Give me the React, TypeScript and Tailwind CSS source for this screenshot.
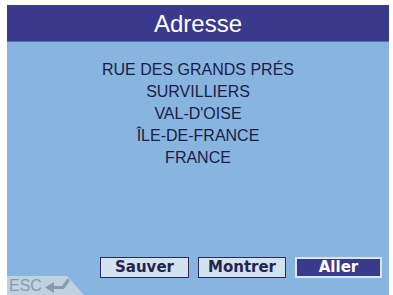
import { type ReactNode } from 'react'

const lines = ['RUE DES GRANDS PRÉS', 'SURVILLIERS', "VAL-D'OISE", 'ÎLE-DE-FRANCE', 'FRANCE']

function Button({ children, primary = false, width }: { children: ReactNode; primary?: boolean; width: string }) {
  return (
    <div
      className={
        primary
          ? `flex h-[21px] items-center justify-center border-2 border-[#d6e6f4] bg-[#3a3a8c] text-[15px] font-bold text-white ${width}`
          : `flex h-[21px] items-center justify-center border border-[#2a2a5c] bg-[#d2e2ee] text-[15px] font-bold text-[#24244e] ${width}`
      }
      style={{ fontFamily: '"DejaVu Sans", sans-serif' }}
    >
      {children}
    </div>
  )
}

export default function App() {
  return (
    <div className="h-[295px] w-[393px] bg-white pl-[7px] pr-[4px] pt-[5px]">
      <div className="flex h-full flex-col" style={{ fontFamily: '"Liberation Sans", Arial, sans-serif' }}>
        <div className="flex h-[37px] items-center justify-center border-b border-[#5a6ab0] bg-[#3a3a8c] pt-[2px] text-[24px] text-white">
          Adresse
        </div>
        <div className="relative flex flex-1 flex-col bg-[#88b4e0]">
          <div className="flex flex-col items-center pt-[17px] text-[16px] leading-[22px] text-[#1c1c44]">
            {lines.map((line) => (
              <div key={line}>{line}</div>
            ))}
          </div>
          <div className="mt-auto flex justify-end gap-[9px] pb-[17px] pr-[7px]">
            <Button width="w-[89px]">Sauver</Button>
            <Button width="w-[88px]">Montrer</Button>
            <Button width="w-[87px]" primary>
              Aller
            </Button>
          </div>
          <div
            className="absolute bottom-0 left-0 flex h-[19px] w-[77px] items-center gap-[2px] bg-[#bfd2e2] pl-[2px]"
            style={{ clipPath: 'polygon(0 0, 60px 0, 100% 100%, 0 100%)' }}
          >
            <span className="text-[16px] leading-none text-[#8a9aaa]">ESC</span>
            <svg width="26" height="14" viewBox="0 0 26 14">
              <path d="M24 1.5 L19 8.5 H9" fill="none" stroke="#8a9aaa" strokeWidth="3.2" strokeLinejoin="round" strokeLinecap="round" />
              <polygon points="1,8.5 10,3 10,14" fill="#8a9aaa" />
            </svg>
          </div>
        </div>
      </div>
    </div>
  )
}
